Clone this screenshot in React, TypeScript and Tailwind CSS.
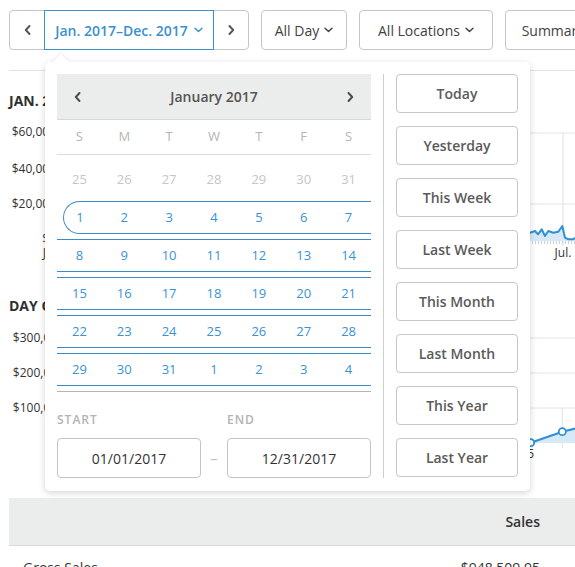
import React from "react";

const ChevronLeft = () => (
  <svg width="7" height="10" viewBox="0 0 7 10" className="block">
    <path d="M5.5 1 L1.8 5 L5.5 9" fill="none" stroke="currentColor" strokeWidth="1.9" strokeLinecap="round" strokeLinejoin="round" />
  </svg>
);
const ChevronRight = () => (
  <svg width="7" height="10" viewBox="0 0 7 10" className="block">
    <path d="M1.5 1 L5.2 5 L1.5 9" fill="none" stroke="currentColor" strokeWidth="1.9" strokeLinecap="round" strokeLinejoin="round" />
  </svg>
);
const ChevronDown = () => (
  <svg width="9" height="6" viewBox="0 0 9 6" className="block">
    <path d="M1 1.2 L4.5 4.6 L8 1.2" fill="none" stroke="currentColor" strokeWidth="1.4" strokeLinecap="round" strokeLinejoin="round" />
  </svg>
);

type Day = { n: number; muted?: boolean; start?: boolean };
const weeks: { days: Day[]; range: boolean }[] = [
  { range: false, days: [25, 26, 27, 28, 29, 30, 31].map((n) => ({ n, muted: true })) },
  { range: true, days: [1, 2, 3, 4, 5, 6, 7].map((n) => ({ n, start: n === 1 })) },
  { range: true, days: [8, 9, 10, 11, 12, 13, 14].map((n) => ({ n })) },
  { range: true, days: [15, 16, 17, 18, 19, 20, 21].map((n) => ({ n })) },
  { range: true, days: [22, 23, 24, 25, 26, 27, 28].map((n) => ({ n })) },
  { range: true, days: [29, 30, 31, 1, 2, 3, 4].map((n) => ({ n })) },
];

const presets = ["Today", "Yesterday", "This Week", "Last Week", "This Month", "Last Month", "This Year", "Last Year"];

// chart 1 data (svg coords)
const c1: [number, number][] = [];
for (let x = 52; x < 521; x += 4) {
  const y = 124 + Math.sin(x * 0.9) * 3 + Math.sin(x * 0.23) * 2;
  c1.push([x, Math.round(y * 10) / 10]);
}
c1.push(
  [521, 123.7], [526, 122], [529, 125.3], [532.7, 120.3], [536, 127], [539.3, 122],
  [544.3, 123.7], [549.3, 122.7], [553.3, 117], [556, 128.7], [559.3, 130.3], [564.3, 130.3], [566, 128.7]
);
const c1Line = c1.map((p, i) => `${i ? "L" : "M"}${p[0]} ${p[1]}`).join(" ");
const c1Fill = `M${c1[0][0]} 132 ` + c1.map((p) => `L${p[0]} ${p[1]}`).join(" ") + ` L566 132 Z`;

const c2: [number, number][] = [
  [60, 127], [91.6, 125], [123.2, 122], [154.8, 120], [186.4, 118], [218, 119], [249.6, 117],
  [281.2, 120], [312.8, 121], [344.4, 123], [376, 124], [407.6, 125], [439.2, 126], [470.8, 127],
  [490, 127.5], [521.7, 128.7], [553.3, 117.7], [584.9, 110],
];
const c2Line = c2.map((p, i) => `${i ? "L" : "M"}${p[0]} ${p[1]}`).join(" ");
const c2Fill = `M60 129 ` + c2.map((p) => `L${p[0]} ${p[1]}`).join(" ") + ` L584.9 129 Z`;

export default function App() {
  return (
    <div className="relative w-[575px] h-[567px] overflow-hidden bg-white font-['Open_Sans',sans-serif] text-[#333]">
      <div className="ml-[9px] w-[566px]">
        {/* controls */}
        <div className="flex items-start gap-[12px] pt-[10px] whitespace-nowrap">
          <div className="flex h-[40px] shrink-0">
            <button className="w-[36px] h-full border border-[#c5c5c5] rounded-l-[4px] flex items-center justify-center text-[#555]">
              <ChevronLeft />
            </button>
            <button className="relative z-10 -ml-px w-[170px] h-full border border-[#3b90ce] flex items-center justify-center gap-[6px] text-[14px] font-semibold text-[#3b90ce]">
              Jan. 2017–Dec. 2017
              <ChevronDown />
            </button>
            <button className="-ml-px w-[36px] h-full border border-[#c5c5c5] rounded-r-[4px] flex items-center justify-center text-[#555]">
              <ChevronRight />
            </button>
          </div>
          <button className="shrink-0 w-[86px] h-[40px] border border-[#c5c5c5] rounded-[4px] flex items-center justify-center gap-[5px] text-[14px] font-medium text-[#3f3f3f]">
            All Day
            <ChevronDown />
          </button>
          <button className="shrink-0 w-[134px] h-[40px] border border-[#c5c5c5] rounded-[4px] flex items-center justify-center gap-[5px] text-[14px] font-medium text-[#3f3f3f]">
            All Locations
            <ChevronDown />
          </button>
          <button className="shrink-0 w-[110px] h-[40px] border border-[#c5c5c5] rounded-[4px] flex items-center justify-center gap-[5px] text-[14px] font-medium text-[#3f3f3f]">
            Summary
            <ChevronDown />
          </button>
        </div>

        <div className="mt-[20px] border-t border-[#e3e3e3]" />

        {/* section 1 */}
        <div className="pt-[22px] text-[14px] leading-[16px] font-bold text-[#2f2f2f] whitespace-nowrap">JAN. 2017–DEC. 2017</div>
        <svg width="566" height="189" className="block" style={{ fontFamily: "'Open Sans', sans-serif" }}>
          <line x1="52" y1="24" x2="566" y2="24" stroke="#e4e4e4" />
          <line x1="52" y1="95" x2="566" y2="95" stroke="#e4e4e4" />
          <line x1="554" y1="24" x2="554" y2="137" stroke="#e0e0e0" />
          <path d={c1Fill} fill="#d7e9f6" />
          <path d={c1Line} fill="none" stroke="#2e90d3" strokeWidth="2" strokeLinejoin="round" />
          <line x1="52" y1="133.5" x2="566" y2="133.5" stroke="#c6d3dc" strokeWidth="3" strokeDasharray="1 2" />
          <g fontSize="12" fill="#333" textAnchor="end">
            <text x="47" y="27">$60,000</text>
            <text x="47" y="64">$40,000</text>
            <text x="47" y="99">$20,000</text>
            <text x="47" y="134">$0</text>
          </g>
          <g fontSize="12" fill="#333" textAnchor="middle">
            <text x="44" y="148">Jan.</text>
            <text x="554" y="148">Jul.</text>
          </g>
        </svg>

        {/* section 2 */}
        <div className="text-[14px] leading-[16px] font-bold text-[#2f2f2f] whitespace-nowrap">DAY OF WEEK</div>
        <svg width="566" height="184" className="block" style={{ fontFamily: "'Open Sans', sans-serif" }}>
          <line x1="60" y1="24" x2="566" y2="24" stroke="#e4e4e4" />
          <line x1="60" y1="59" x2="566" y2="59" stroke="#e4e4e4" />
          <line x1="60" y1="94" x2="566" y2="94" stroke="#e4e4e4" />
          <line x1="553.3" y1="94" x2="553.3" y2="134" stroke="#e0e0e0" />
          <path d={c2Fill} fill="#d7e9f6" />
          <path d={c2Line} fill="none" stroke="#2e90d3" strokeWidth="2" strokeLinejoin="round" />
          {c2.map((p, i) => (
            <circle key={i} cx={p[0]} cy={p[1]} r="3.5" fill="#fff" stroke="#2e90d3" strokeWidth="1.8" />
          ))}
          <g fontSize="12" fill="#333" textAnchor="end">
            <text x="55" y="28">$300,000</text>
            <text x="55" y="63">$200,000</text>
            <text x="55" y="98">$100,000</text>
            <text x="55" y="133">$0</text>
          </g>
          <text x="525" y="144" fontSize="12" fill="#333" textAnchor="end">Jun. 5</text>
        </svg>

        {/* table */}
        <div className="h-[48px] bg-[#ebecec] border-b border-[#d9d9d9] flex items-center justify-end pr-[35px] text-[14px] font-semibold text-[#333]">
          Sales
        </div>
        <div className="flex justify-between pt-[12px] pl-[14px] pr-[35px] text-[14px] leading-[20px] text-[#333]">
          <span>Gross Sales</span>
          <span>$948,509.95</span>
        </div>
      </div>

      {/* popover */}
      <div className="absolute left-[45px] top-[62px] w-[485px] h-[429px] bg-white rounded-[5px] shadow-[0_2px_7px_rgba(0,0,0,0.17)]">
        <div className="absolute -top-[6px] left-[10px] w-[12px] h-[12px] bg-white rotate-45 shadow-[-1px_-1px_2px_rgba(0,0,0,0.07)]" />
        <div className="relative flex p-[12px]">
          {/* calendar */}
          <div className="w-[314px]">
            <div className="h-[46px] bg-[#ebecec] border-b border-[#d6d6d6] flex items-center justify-between px-[17px] text-[#4a4a4a]">
              <ChevronLeft />
              <span className="text-[14px] font-semibold text-[#555]">January 2017</span>
              <ChevronRight />
            </div>
            <div className="h-[35px] border-b border-[#dcdcdc] grid grid-cols-7">
              {["S", "M", "T", "W", "T", "F", "S"].map((d, i) => (
                <div key={i} className="flex items-center justify-center text-[13px] text-[#b5b5b5]">
                  {d}
                </div>
              ))}
            </div>
            <div className="pt-[8px] border-b border-[#b5b5b5]">
              {weeks.map((w, wi) => (
                <div key={wi} className="grid grid-cols-7 h-[33px] mb-[5px]">
                  {w.days.map((d, di) =>
                    d.start ? (
                      <div key={di} className="min-w-0 pl-[6px]">
                        <div className="h-full border border-r-0 border-[#3a8cc6] rounded-l-[17px] flex items-center justify-center pr-[6px] text-[13px] text-[#3a93d0]">
                          {d.n}
                        </div>
                      </div>
                    ) : (
                      <div
                        key={di}
                        className={
                          w.range
                            ? "min-w-0 border-y border-[#3a8cc6] flex items-center justify-center text-[13px] text-[#3a93d0]"
                            : "min-w-0 flex items-center justify-center text-[13px] text-[#c6c6c6]"
                        }
                      >
                        {d.n}
                      </div>
                    )
                  )}
                </div>
              ))}
            </div>
            <div className="flex mt-[20px] text-[12px] leading-[16px] font-semibold tracking-[1px] text-[#b3b3b3]">
              <div className="w-[170px]">START</div>
              <div>END</div>
            </div>
            <div className="flex mt-[10px] h-[40px]">
              <div className="w-[144px] border border-[#c4c4c4] rounded-[4px] flex items-center justify-center text-[14px] text-[#333]">
                01/01/2017
              </div>
              <div className="w-[26px] flex items-center justify-center text-[14px] text-[#bdbdbd]">–</div>
              <div className="w-[144px] border border-[#c4c4c4] rounded-[4px] flex items-center justify-center text-[14px] text-[#333]">
                12/31/2017
              </div>
            </div>
          </div>

          <div className="ml-[12px] w-px bg-[#cfcfcf]" />

          {/* presets */}
          <div className="ml-[12px] w-[122px] flex flex-col gap-[13px]">
            {presets.map((p) => (
              <button
                key={p}
                className="h-[39px] border border-[#c6c6c6] rounded-[4px] flex items-center justify-center text-[14px] font-semibold text-[#5a5a5a]"
              >
                {p}
              </button>
            ))}
          </div>
        </div>
      </div>
    </div>
  );
}
